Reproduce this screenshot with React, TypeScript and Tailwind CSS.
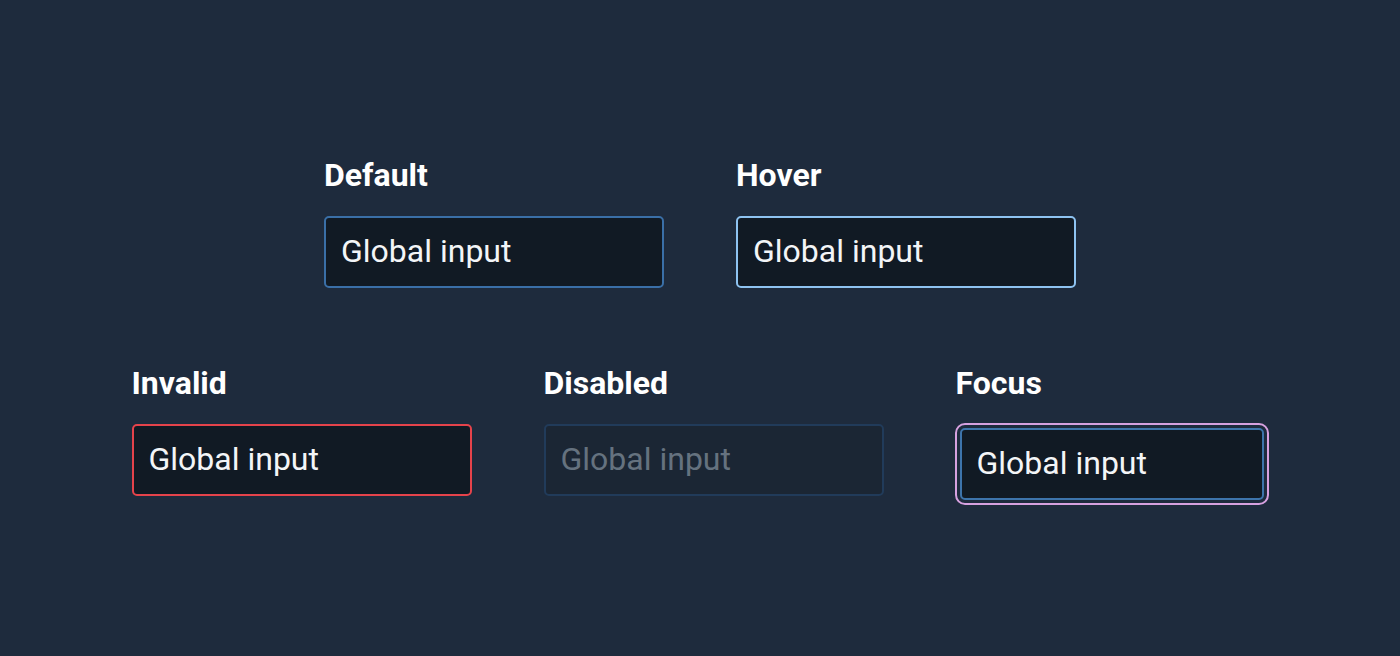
import React from "react";

const font = { fontFamily: "Roboto, 'Noto Sans', sans-serif" };

function Field({
  label,
  colClass = "w-[340px]",
  boxClass,
  textClass,
  wrapClass = "mt-[23px]",
}: {
  label: string;
  colClass?: string;
  boxClass: string;
  textClass: string;
  wrapClass?: string;
}) {
  return (
    <div className={`flex flex-col ${colClass}`}>
      <div className="h-[36px] text-[32px] leading-[36px] font-bold text-white">{label}</div>
      <div className={`${wrapClass} flex h-[72px] items-center rounded-[5px] border-2 pl-[15px] pb-[3px] ${boxClass}`}>
        <span className={`text-[32px] leading-[36px] ${textClass}`}>Global input</span>
      </div>
    </div>
  );
}

export default function App() {
  return (
    <div
      className="flex h-[656px] w-full flex-col items-center bg-[#1e2b3d] pt-[157px]"
      style={font}
    >
      <div className="flex gap-[72px]">
        <Field label="Default" boxClass="border-[#3a6fa7] bg-[#111a24] w-[340px]" textClass="text-[#f3f5f7]" />
        <Field label="Hover" boxClass="border-[#8ec3f1] bg-[#111a24] w-[340px]" textClass="text-[#f3f5f7]" />
      </div>
      <div className="mt-[77px] flex gap-[72px]">
        <Field label="Invalid" boxClass="border-[#e5434b] bg-[#111a24] w-[340px]" textClass="text-[#f3f5f7]" />
        <Field label="Disabled" boxClass="border-[#213b5a] bg-[#1b2634] w-[340px]" textClass="text-[#65727f]" />
        <Field
          label="Focus"
          colClass="w-[313px]"
          wrapClass="mt-[27px] ml-[4px]"
          boxClass="w-[304px] border-[#3d74ab] bg-[#111a24] outline-2 outline-offset-[3px] outline-[#d7a1e0]"
          textClass="text-[#f3f5f7]"
        />
      </div>
    </div>
  );
}
